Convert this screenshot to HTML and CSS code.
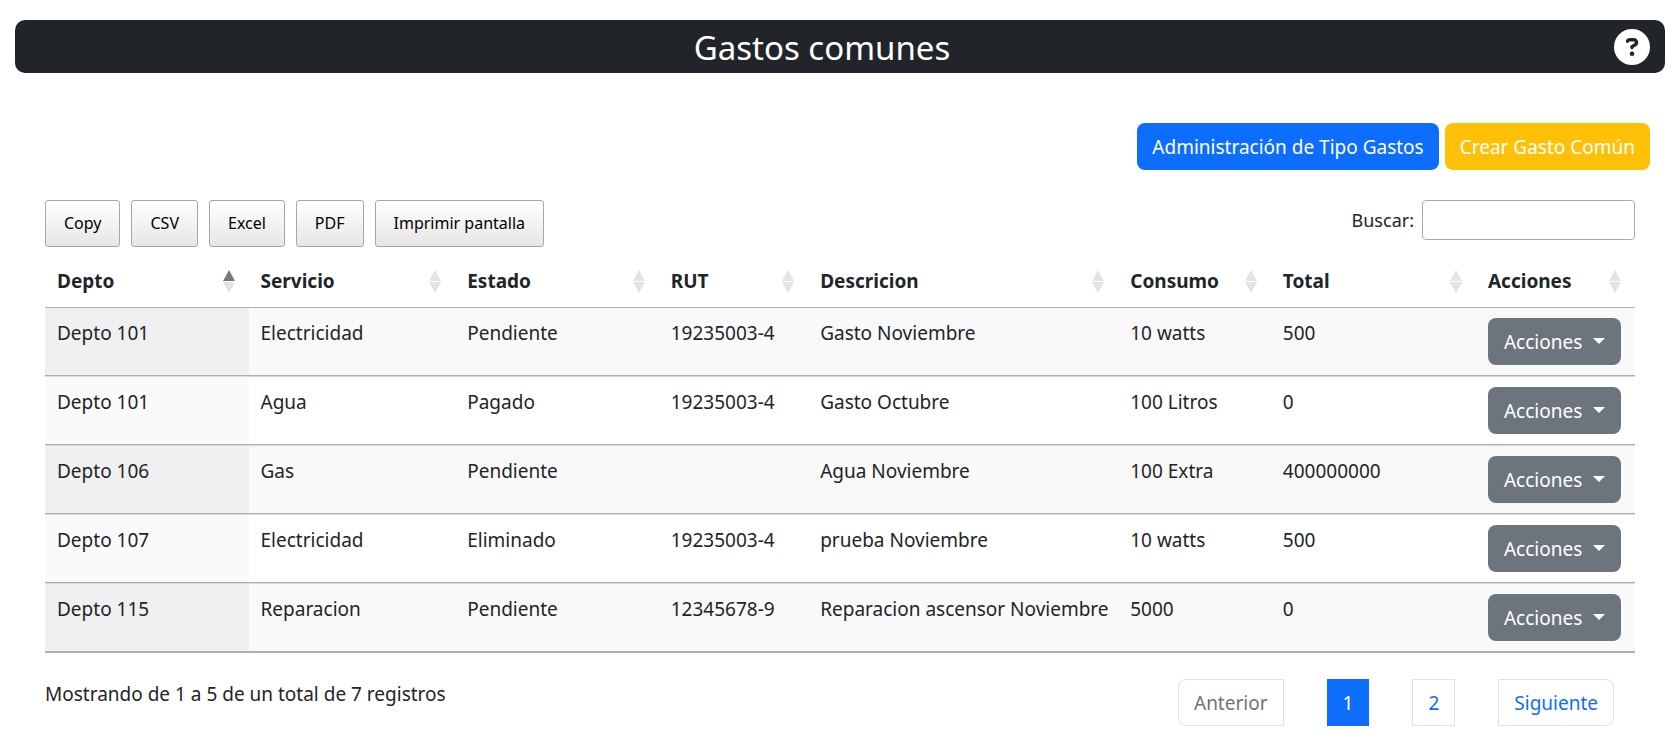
FILE: index.html
```html
<!DOCTYPE html>
<html lang="es">
<head>
<meta charset="utf-8">
<meta name="viewport" content="width=device-width, initial-scale=1">
<title>Gastos comunes</title>
<link rel="stylesheet" href="styles.css">
</head>
<body>
<header class="page-header">
  <h3 class="page-title">Gastos comunes</h3>
  <button type="button" class="help" aria-label="Ayuda">
    <svg viewBox="0 0 512 512" aria-hidden="true"><path fill="currentColor" d="M256 512A256 256 0 1 0 256 0a256 256 0 1 0 0 512zM169.800 165.300c7.900-22.300 29.100-37.300 52.800-37.300h58.300c34.900 0 63.100 28.300 63.100 63.100c0 22.600-12.100 43.500-31.700 54.800L280 264.400c-.2 13-10.900 23.600-24 23.600c-13.300 0-24-10.700-24-24V250.500c0-8.600 4.600-16.500 12.100-20.800l44.300-25.400c4.700-2.700 7.600-7.700 7.600-13.100c0-8.400-6.800-15.100-15.100-15.100H222.600c-3.400 0-6.400 2.100-7.500 5.300l-.4 1.200c-4.400 12.500-18.200 19-30.600 14.600s-19-18.200-14.600-30.600l.4-1.200zM224 352a32 32 0 1 1 64 0 32 32 0 1 1 -64 0z"/></svg>
  </button>
</header>
<main>
  <div class="actions">
    <a href="#" class="btn btn-primary">Administración de Tipo Gastos</a>
    <a href="#" class="btn btn-warning">Crear Gasto Común</a>
  </div>
  <section class="datatable">
    <div class="toolbar">
      <div class="exports">
        <button type="button" class="dt-button">Copy</button>
        <button type="button" class="dt-button">CSV</button>
        <button type="button" class="dt-button">Excel</button>
        <button type="button" class="dt-button">PDF</button>
        <button type="button" class="dt-button">Imprimir pantalla</button>
      </div>
      <div class="filter">
        <label for="search">Buscar:</label>
        <input type="search" id="search" class="search">
      </div>
    </div>
    <table class="grid">
      <colgroup>
        <col class="c-depto"><col class="c-servicio"><col class="c-estado"><col class="c-rut"><col class="c-desc"><col class="c-consumo"><col class="c-total"><col class="c-acciones">
      </colgroup>
      <thead>
        <tr>
          <th class="sort-asc"><span class="head">Depto<span class="sort"></span></span></th>
          <th><span class="head">Servicio<span class="sort"></span></span></th>
          <th><span class="head">Estado<span class="sort"></span></span></th>
          <th><span class="head">RUT<span class="sort"></span></span></th>
          <th><span class="head">Descricion<span class="sort"></span></span></th>
          <th><span class="head">Consumo<span class="sort"></span></span></th>
          <th><span class="head">Total<span class="sort"></span></span></th>
          <th><span class="head">Acciones<span class="sort"></span></span></th>
        </tr>
      </thead>
      <tbody>
        <tr><td>Depto 101</td><td>Electricidad</td><td>Pendiente</td><td>19235003-4</td><td>Gasto Noviembre</td><td>10 watts</td><td>500</td><td><button type="button" class="btn btn-secondary">Acciones</button></td></tr>
        <tr><td>Depto 101</td><td>Agua</td><td>Pagado</td><td>19235003-4</td><td>Gasto Octubre</td><td>100 Litros</td><td>0</td><td><button type="button" class="btn btn-secondary">Acciones</button></td></tr>
        <tr><td>Depto 106</td><td>Gas</td><td>Pendiente</td><td></td><td>Agua Noviembre</td><td>100 Extra</td><td>400000000</td><td><button type="button" class="btn btn-secondary">Acciones</button></td></tr>
        <tr><td>Depto 107</td><td>Electricidad</td><td>Eliminado</td><td>19235003-4</td><td>prueba Noviembre</td><td>10 watts</td><td>500</td><td><button type="button" class="btn btn-secondary">Acciones</button></td></tr>
        <tr><td>Depto 115</td><td>Reparacion</td><td>Pendiente</td><td>12345678-9</td><td>Reparacion ascensor Noviembre</td><td>5000</td><td>0</td><td><button type="button" class="btn btn-secondary">Acciones</button></td></tr>
      </tbody>
    </table>
    <div class="table-footer">
      <div class="info">Mostrando de 1 a 5 de un total de 7 registros</div>
      <nav class="pagination" aria-label="Paginación">
        <a href="#" class="page page-prev" aria-disabled="true">Anterior</a>
        <a href="#" class="page page-active" aria-current="page">1</a>
        <a href="#" class="page">2</a>
        <a href="#" class="page page-next">Siguiente</a>
      </nav>
    </div>
  </section>
</main>
</body>
</html>
```
FILE: styles.css
```css
* { box-sizing: border-box; }

body {
  margin: 0;
  padding: 20px 8px 0 15px;
  background: #fff;
  color: #212529;
  font-family: "Noto Sans", sans-serif;
  font-size: 19px;
  line-height: 31px;
}

button, input { font: inherit; }
a { text-decoration: none; }

.page-header {
  display: flex;
  align-items: center;
  padding: 5px 15px;
  border-radius: 10px;
  background: #212529;
  color: #fff;
}

.page-title {
  flex: 1;
  margin: 0;
  padding-top: 2px;
  font-size: 33px;
  font-weight: 400;
  line-height: 41px;
  text-align: center;
}

.help {
  display: block;
  width: 36px;
  height: 36px;
  padding: 0;
  border: 0;
  background: none;
  color: #fff;
}

.help svg { display: block; }

.actions {
  display: flex;
  justify-content: flex-end;
  gap: 6px;
  margin-top: 50px;
  padding-right: 15px;
}

.btn {
  display: inline-block;
  padding: 9px 15px 7px;
  border: 0;
  border-radius: 8px;
  line-height: 31px;
  color: #fff;
  white-space: nowrap;
}

.btn-primary { background: #0d6efd; }
.btn-warning { background: #ffc107; }

.btn-secondary {
  display: flex;
  align-items: center;
  justify-content: space-between;
  width: 100%;
  padding: 9px 16px 7px;
  background: #6c757d;
}

.btn-secondary::after {
  content: "";
  margin-bottom: 4px;
  border: 6px solid transparent;
  border-top-color: #fff;
  border-bottom: 0;
}

.datatable { padding: 30px 30px 0; }

.toolbar {
  display: flex;
  justify-content: space-between;
  align-items: flex-start;
}

.exports {
  display: flex;
  gap: 11px;
}

.dt-button {
  padding: 8px 18px;
  border: 1px solid #a6a6a6;
  border-radius: 3px;
  background: linear-gradient(to bottom, #fff, #e6e6e6);
  color: #000;
  font-size: 16px;
  line-height: 29px;
}

.filter {
  display: flex;
  align-items: center;
  gap: 8px;
  font-size: 18px;
}

.search {
  width: 213px;
  height: 40px;
  padding: 5px;
  border: 1px solid #aaa;
  border-radius: 4px;
  background: transparent;
}

.grid {
  width: 100%;
  table-layout: fixed;
  border-collapse: separate;
  border-spacing: 0;
  border-bottom: 1px solid #b0b0b0;
}

.c-depto { width: 12.8%; }
.c-servicio { width: 13%; }
.c-estado { width: 12.8%; }
.c-rut { width: 9.4%; }
.c-desc { width: 19.5%; }
.c-consumo { width: 9.6%; }
.c-total { width: 12.9%; }
.c-acciones { width: 10%; }

.grid th {
  padding: 19px 14px 10px 12px;
  border-bottom: 1px solid #b0b0b0;
  font-weight: 700;
  text-align: left;
}

.head {
  display: flex;
  align-items: center;
  justify-content: space-between;
}

.sort {
  display: flex;
  flex-direction: column;
  gap: 1px;
}

.sort::before,
.sort::after {
  content: "";
  border: 6px solid transparent;
}

.sort::before {
  border-top: 0;
  border-bottom: 11px solid #e3e3e3;
}

.sort::after {
  border-bottom: 0;
  border-top: 11px solid #e3e3e3;
}

.sort-asc .sort::before { border-bottom-color: #77787b; }

.grid td {
  padding: 10px 14px 10px 12px;
  border-top: 1px solid #d8d8d8;
  border-bottom: 1px solid #b0b0b0;
  vertical-align: top;
  white-space: nowrap;
}

.grid tbody tr:first-child td { border-top: 0; }
.grid tbody tr:nth-child(odd) td { background: #f9f9f9; }
.grid tbody tr:nth-child(odd) td:first-child { background: #f0f0f0; }
.grid tbody tr:nth-child(even) td:first-child { background: #fafafa; }

.table-footer {
  display: flex;
  justify-content: space-between;
  align-items: flex-start;
  padding: 26px 21px 0 0;
}

.pagination {
  display: flex;
  gap: 43px;
}

.page {
  padding: 9px 15px 7px;
  border: 1px solid #dee2e6;
  color: #0d6efd;
  line-height: 29px;
}

.page-prev {
  border-radius: 8px 0 0 8px;
  color: #6c757d;
}

.page-next { border-radius: 0 8px 8px 0; }

.page-active {
  border-color: #0d6efd;
  background: #0d6efd;
  color: #fff;
}
```
